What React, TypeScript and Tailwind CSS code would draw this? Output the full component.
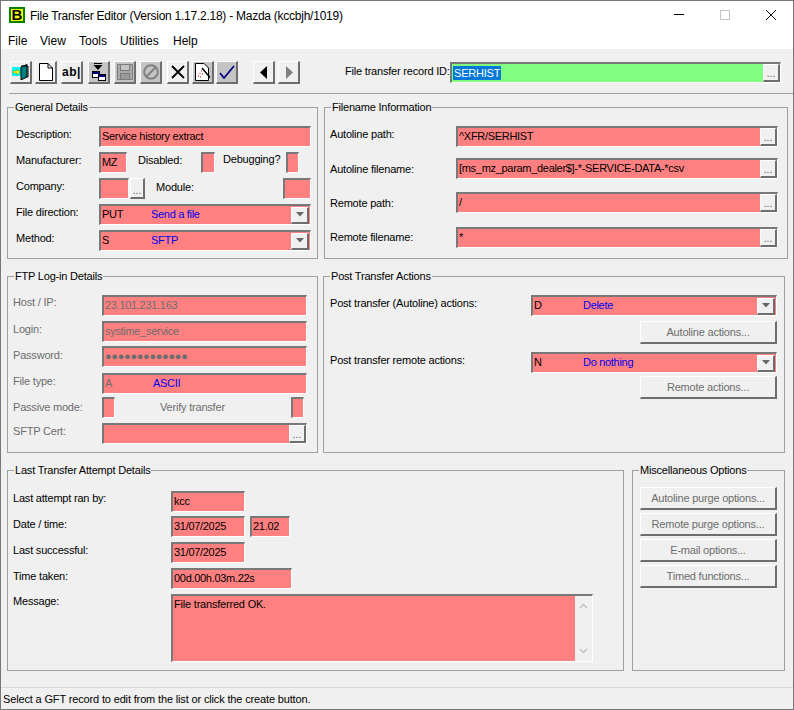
import React from "react";

const sunken = "border-t-2 border-l-2 border-b border-r border-t-[#787878] border-l-[#787878] border-b-white border-r-white";
const raised = "border-t border-l border-b-2 border-r-2 border-t-white border-l-white border-b-[#6e6e6e] border-r-[#6e6e6e]";

function Group({ title, className, children }: { title: string; className: string; children?: React.ReactNode }) {
  return (
    <div className={"relative border border-[#a0a0a0] shrink-0 " + className}>
      <span className="absolute left-[6px] top-[-8px] bg-[#f0f0f0] px-px leading-[14px] text-black">{title}</span>
      {children}
    </div>
  );
}

function Ellipsis({ className = "" }: { className?: string }) {
  return (
    <div className={"shrink-0 bg-[#f0f0f0] text-[#555] flex items-end justify-center leading-[12px] text-[10px] tracking-normal " + raised + " " + className}>...</div>
  );
}

function Input({ className = "", text = "", muted = false, children }: { className?: string; text?: string; muted?: boolean; children?: React.ReactNode }) {
  return (
    <div className={"h-[21px] shrink-0 flex items-center overflow-hidden bg-[#ff8080] pl-px leading-[16px] tracking-[-0.3px] " + sunken + " " + (muted ? "text-[#6d6d6d] " : "text-black ") + className}>
      {text ? <span className="pb-[2px] whitespace-nowrap">{text}</span> : null}
      {children}
    </div>
  );
}

function EllipsisInput({ className, text = "", muted = false }: { className: string; text?: string; muted?: boolean }) {
  return (
    <Input className={className} muted={muted}>
      <span className="flex-1 min-w-0 pb-[2px] whitespace-nowrap">{text}</span>
      <Ellipsis className="w-[17px] h-[18px]" />
    </Input>
  );
}

function Select({ className, code, desc, codeW }: { className: string; code: string; desc: string; codeW: string }) {
  return (
    <Input className={"pl-[2px] " + className}>
      <span className={"shrink-0 pb-[2px] " + codeW}>{code}</span>
      <span className="flex-1 text-[#0000f0] pb-[2px]">{desc}</span>
      <div className={"w-[18px] h-[17px] shrink-0 bg-[#f0f0f0] flex items-center justify-center mr-px " + raised}>
        <svg width="8" height="5" viewBox="0 0 8 5"><path d="M0 0h8L4 4.500z" fill="#666" /></svg>
      </div>
    </Input>
  );
}

function Label({ className = "", text, muted = false }: { className?: string; text: string; muted?: boolean }) {
  return <div className={"h-[21px] leading-[17px] shrink-0 whitespace-nowrap " + (muted ? "text-[#6d6d6d] " : "") + className}>{text}</div>;
}

function ActionButton({ text, className = "" }: { text: string; className?: string }) {
  return (
    <div className={"w-[137px] h-[23px] pt-px flex items-center justify-center bg-[#f0f0f0] text-[#6d6d6d] shrink-0 " + raised + " " + className}>{text}</div>
  );
}

function Tool({ className = "", shaded = false, children }: { className?: string; shaded?: boolean; children: React.ReactNode }) {
  return (
    <div className={"w-[22px] h-[23px] shrink-0 flex items-center justify-center " + raised + " " + (shaded ? "bg-[#c4c4c4] " : "bg-[#f0f0f0] ") + className}>
      {children}
    </div>
  );
}

export default function App() {
  return (
    <div className="w-[794px] h-[710px] flex flex-col border border-[#777] bg-[#f0f0f0] text-[11px] tracking-[-0.2px] text-black overflow-hidden font-['Liberation_Sans',Arial,sans-serif]">
      {/* Title */}
      <div className="h-[27px] shrink-0 bg-white flex items-center relative tracking-normal">
        <div className="ml-[8px] w-[16px] h-[16px] border-2 border-[#008000] bg-[#ffff00] flex items-center justify-center text-[15px] font-bold leading-none">B</div>
        <div className="ml-[5px] pt-[2px] text-[12px] tracking-[-0.25px] whitespace-nowrap">File Transfer Editor (Version 1.17.2.18) - Mazda (kccbjh/1019)</div>
        <div className="ml-auto flex items-center mr-[16px]">
          <div className="w-[10px] h-px bg-black" />
          <div className="ml-[36px] w-[10px] h-[10px] border border-[#c4c4c4]" />
          <svg className="ml-[35px]" width="12" height="12" viewBox="0 0 12 12"><path d="M1 1l10 10M11 1L1 11" stroke="#111" strokeWidth="1" fill="none" /></svg>
        </div>
      </div>
      {/* Menu */}
      <div className="h-[21px] shrink-0 bg-white flex items-center pl-[7px] pt-[5px] text-[12px] tracking-normal">
        <span className="w-[32px]">File</span>
        <span className="w-[39px]">View</span>
        <span className="w-[41px]">Tools</span>
        <span className="w-[53px]">Utilities</span>
        <span>Help</span>
      </div>
      {/* Toolbar */}
      <div className="h-[45px] shrink-0 ml-[8px] border-b border-[#a0a0a0] flex items-start pt-[12px] pl-px">
        <Tool>
          <svg width="18" height="16" viewBox="0 0 18 16">
            <rect x="0" y="3" width="9" height="9" fill="#00ffff" />
            <path d="M1 7h4V5l3 3-3 3V9H1z" fill="#ffff00" stroke="#808000" strokeWidth=".5" />
            <path d="M9 3l6-2.500V13l-6 3z" fill="#008080" stroke="#000" strokeWidth="1" />
            <path d="M9 2h7v11h-1" fill="none" stroke="#000" strokeWidth="1" />
          </svg>
        </Tool>
        <Tool className="ml-[3px]">
          <svg width="14" height="18" viewBox="0 0 14 18"><path d="M.5.500H9L13.500 5v12.500H.5z" fill="#fff" stroke="#000" /><path d="M9 .5V5h4.500" fill="none" stroke="#000" /></svg>
        </Tool>
        <Tool className="ml-[4px]">
          <span className="font-bold text-[12px] tracking-[0.5px] leading-none whitespace-nowrap">ab|</span>
        </Tool>
        <Tool className="ml-[5px]" shaded>
          <svg width="14" height="18" viewBox="0 0 14 18">
            <path d="M2 .5h8" stroke="#000" /><path d="M1.500 2h9L6 7z" fill="#000" />
            <rect x=".5" y="8.500" width="7" height="6" fill="#fff" stroke="#000" /><rect x="1" y="9" width="6" height="2" fill="#000080" />
            <rect x="6.500" y="11.500" width="7" height="6" fill="#fff" stroke="#000" /><rect x="7" y="12" width="6" height="2" fill="#000080" />
          </svg>
        </Tool>
        <Tool className="ml-[4px]" shaded>
          <svg width="16" height="16" viewBox="0 0 16 16">
            <path d="M.5.500h15v15H.5z" fill="#a8a8a8" stroke="#7c7c7c" />
            <rect x="3.500" y=".5" width="9" height="6" fill="#c4c4c4" stroke="#7c7c7c" />
            <rect x="3.500" y="9.500" width="9" height="6" fill="#9a9a9a" stroke="#7c7c7c" />
          </svg>
        </Tool>
        <Tool className="ml-[4px]" shaded>
          <svg width="16" height="16" viewBox="0 0 16 16"><circle cx="8" cy="8" r="6.800" fill="none" stroke="#808080" strokeWidth="2" /><path d="M3.500 12.500l9-9" stroke="#808080" strokeWidth="2" /></svg>
        </Tool>
        <Tool className="ml-[5px]">
          <svg width="14" height="14" viewBox="0 0 14 14"><path d="M1 1l12 12M13 1L1 13" stroke="#000" strokeWidth="1.800" /></svg>
        </Tool>
        <Tool className="ml-[3px]" shaded>
          <svg width="16" height="18" viewBox="0 0 16 18">
            <path d="M.5.500H9L13.500 5v12.500H.5z" fill="#fff" stroke="#000" />
            <path d="M7 5l8 9.500" stroke="#000" strokeWidth="1.500" />
            <path d="M6 8h1M4.500 10.500h1M7 11h1M3 13h1M5 14h1" stroke="#e00000" />
          </svg>
        </Tool>
        <Tool className="ml-[2px]" shaded>
          <svg width="16" height="14" viewBox="0 0 16 14"><path d="M1 8l4 5L15 1" fill="none" stroke="#000080" strokeWidth="1.700" /></svg>
        </Tool>
        <Tool className="ml-[15px]">
          <svg width="8" height="13" viewBox="0 0 8 13"><path d="M7 0v13L0 6.500z" fill="#000" /></svg>
        </Tool>
        <Tool className="ml-[3px]">
          <svg width="8" height="13" viewBox="0 0 8 13"><path d="M1 0v13l7-6.500z" fill="#808080" /></svg>
        </Tool>
        <div className="ml-[45px] w-[105px] mt-[2px] leading-[16px] whitespace-nowrap">File transfer record ID:</div>
        <div className={"h-[21px] w-[331px] mt-px flex items-center bg-[#80ff80] pl-[1px] " + sunken}>
          <span className="bg-[#0078d7] text-white leading-[14px] px-px tracking-[-0.2px]">SERHIST</span>
          <span className="flex-1" />
          <Ellipsis className="w-[17px] h-[18px]" />
        </div>
      </div>
      {/* Row 1 */}
      <div className="flex mt-[13px] ml-[6px] shrink-0">
        <Group title="General Details" className="w-[311px] h-[152px] pt-[18px] pl-[8px] flex flex-col gap-[5px]">
          <div className="flex"><Label className="w-[83px]" text="Description:" /><Input className="w-[212px]" text="Service history extract" /></div>
          <div className="flex">
            <Label className="w-[83px]" text="Manufacturer:" />
            <Input className="w-[28px]" text="MZ" />
            <Label className="ml-[11px] w-[63px]" text="Disabled:" />
            <Input className="w-[14px]" />
            <Label className="ml-[8px] w-[63px] -mt-px" text="Debugging?" />
            <Input className="w-[13px]" />
          </div>
          <div className="flex">
            <Label className="w-[83px]" text="Company:" />
            <Input className="w-[30px]" />
            <Ellipsis className="w-[15px] h-[21px] ml-px" />
            <Label className="ml-[11px] w-[127px] pt-px" text="Module:" />
            <Input className="w-[28px]" />
          </div>
          <div className="flex"><Label className="w-[83px]" text="File direction:" /><Select className="w-[212px]" code="PUT" desc="Send a file" codeW="w-[49px]" /></div>
          <div className="flex"><Label className="w-[83px]" text="Method:" /><Select className="w-[212px]" code="S" desc="SFTP" codeW="w-[49px]" /></div>
        </Group>
        <Group title="Filename Information" className="ml-[6px] w-[464px] h-[152px] pt-[18px] pl-[5px]">
          <div className="flex"><Label className="w-[126px]" text="Autoline path:" /><EllipsisInput className="w-[322px]" text="^XFR/SERHIST" /></div>
          <div className="flex mt-[11px]"><Label className="w-[126px] pt-[3px]" text="Autoline filename:" /><EllipsisInput className="w-[322px]" text="[ms_mz_param_dealer$]-*-SERVICE-DATA-*csv" /></div>
          <div className="flex mt-[13px]"><Label className="w-[126px] pt-[3px]" text="Remote path:" /><EllipsisInput className="w-[322px]" text="/" /></div>
          <div className="flex mt-[14px]"><Label className="w-[126px] pt-[2px]" text="Remote filename:" /><EllipsisInput className="w-[322px]" text="*" /></div>
        </Group>
      </div>
      {/* Row 2 */}
      <div className="flex mt-[17px] ml-[6px] shrink-0">
        <Group title="FTP Log-in Details" className="w-[311px] h-[177px] pt-[18px] pl-[5px]">
          <div className="flex"><Label muted className="w-[89px] -mt-px" text="Host / IP:" /><Input muted className="w-[205px]" text="23.101.231.163" /></div>
          <div className="flex mt-[5px]"><Label muted className="w-[89px]" text="Login:" /><Input muted className="w-[205px]" text="systime_service" /></div>
          <div className="flex mt-[4px]"><Label muted className="w-[89px] pt-px" text="Password:" /><Input muted className="w-[205px] pl-[2px]" text="●●●●●●●●●●●●●" /></div>
          <div className="flex mt-[6px]"><Label muted className="w-[89px]" text="File type:" />
            <Input muted className="w-[205px] pl-[2px]">
              <span className="w-[48px] pb-[2px]">A</span><span className="text-[#0000f0] pb-[2px]">ASCII</span>
            </Input>
          </div>
          <div className="flex mt-[3px]">
            <Label muted className="w-[89px] pt-[2px]" text="Passive mode:" />
            <Input className="w-[13px]" />
            <Label muted className="ml-[45px] w-[131px] pt-[2px]" text="Verify transfer" />
            <Input className="w-[13px]" />
          </div>
          <div className="flex mt-[5px]"><Label muted className="w-[89px]" text="SFTP Cert:" /><EllipsisInput className="w-[205px]" /></div>
        </Group>
        <Group title="Post Transfer Actions" className="ml-[5px] w-[462px] h-[177px] pt-[18px] pl-[6px]">
          <div className="flex"><Label className="w-[201px]" text="Post transfer (Autoline) actions:" /><Select className="w-[246px]" code="D" desc="Delete" codeW="w-[49px]" /></div>
          <ActionButton text="Autoline actions..." className="ml-[310px] mt-[5px]" />
          <div className="flex mt-[8px]"><Label className="w-[201px]" text="Post transfer remote actions:" /><Select className="w-[246px]" code="N" desc="Do nothing" codeW="w-[49px]" /></div>
          <ActionButton text="Remote actions..." className="ml-[310px] mt-[3px]" />
        </Group>
      </div>
      {/* Row 3 */}
      <div className="flex mt-[17px] ml-[6px] shrink-0">
        <Group title="Last Transfer Attempt Details" className="w-[617px] h-[201px] pt-[20px] pl-[5px]">
          <div className="flex"><Label className="w-[158px] -mt-px" text="Last attempt ran by:" /><Input className="w-[74px]" text="kcc" /></div>
          <div className="flex mt-[4px]"><Label className="w-[158px]" text="Date / time:" /><Input className="w-[74px] pl-[2px]" text="31/07/2025" /><Input className="w-[40px] ml-[5px]" text="21.02" /></div>
          <div className="flex mt-[5px]"><Label className="w-[158px]" text="Last successful:" /><Input className="w-[74px] pl-[2px]" text="31/07/2025" /></div>
          <div className="flex mt-[5px]"><Label className="w-[158px]" text="Time taken:" /><Input className="w-[121px]" text="00d.00h.03m.22s" /></div>
          <div className="flex mt-[5px]">
            <Label className="w-[158px] -mt-px" text="Message:" />
            <div className={"w-[422px] h-[68px] flex bg-[#f0f0f0] " + sunken}>
              <div className="w-[402px] bg-[#ff8080] pl-[1px] leading-[17px]">File transferred OK.</div>
              <div className="flex-1 flex flex-col items-center justify-between py-[7px]">
                <svg width="9" height="6" viewBox="0 0 9 6"><path d="M1 5l3.500-3.500L8 5" fill="none" stroke="#c0c0c0" strokeWidth="1.500" /></svg>
                <svg width="9" height="6" viewBox="0 0 9 6"><path d="M1 1l3.500 3.500L8 1" fill="none" stroke="#c0c0c0" strokeWidth="1.500" /></svg>
              </div>
            </div>
          </div>
        </Group>
        <Group title="Miscellaneous Options" className="ml-[8px] w-[153px] h-[201px] pt-[16px] pl-[7px] flex flex-col gap-[3px]">
          <ActionButton text="Autoline purge options..." />
          <ActionButton text="Remote purge options..." />
          <ActionButton text="E-mail options..." />
          <ActionButton text="Timed functions..." />
        </Group>
      </div>
      {/* Status */}
      <div className="mt-[16px] flex-1 border-t border-[#d8d8d8] pl-[2px] pt-[3px] leading-[16px] tracking-[-0.15px]">Select a GFT record to edit from the list or click the create button.</div>
    </div>
  );
}
